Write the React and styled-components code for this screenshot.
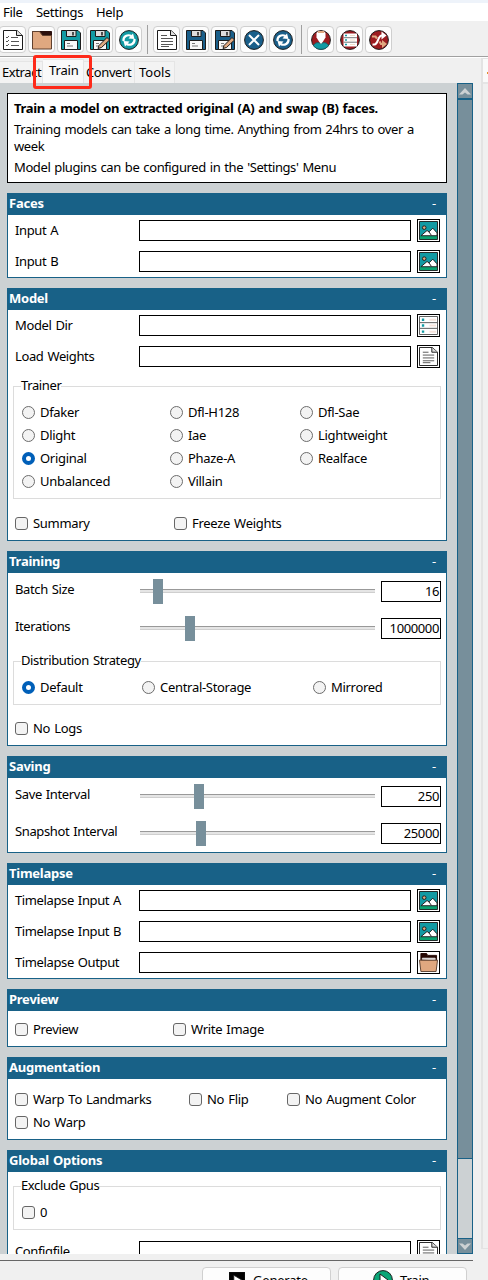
import React from "react";
import styled, { createGlobalStyle, css } from "styled-components";

const BLUE = "#186187";
const PANEL = "#ccd1d3";
const STEEL = "#778f9b";
const TEAL = "#129aa3";
const NAVY = "#1a5f8a";
const MAROON = "#9c1c20";
const TAN = "#e0a880";
const INK = "#1c1c1c";

const Global = createGlobalStyle`
  * { box-sizing: border-box; }
  body { margin: 0; background: #f0f0f0; overflow: hidden; }
`;

const Window = styled.div`
  width: 488px;
  height: 1280px;
  overflow: hidden;
  display: flex;
  flex-direction: column;
  background: #f0f0f0;
  color: #000;
  font: 13px/18px "Noto Sans", "Open Sans", sans-serif;
  letter-spacing: -0.38px;
  word-spacing: 1px;
  white-space: nowrap;
`;

const TitleEdge = styled.div`
  height: 3px;
  background: #eef3fa;
  flex: none;
`;

const MenuBar = styled.nav`
  height: 18px;
  flex: none;
  background: #fff;
  display: flex;
  gap: 14px;
  padding-left: 3px;
  line-height: 19px;
  letter-spacing: -0.3px;
`;

const MenuItem = styled.span`
  width: ${(p) => p.$w}px;
`;

const Toolbar = styled.div`
  height: 36px;
  flex: none;
  display: flex;
  align-items: flex-start;
  gap: 2px;
  padding-top: 5px;
  margin-left: -1px;
  border-bottom: 1px solid #a0a0a0;
  box-shadow: 0 1px 0 #fff;
`;

const ToolButton = styled.button`
  width: 27px;
  height: 27px;
  flex: none;
  padding: 0;
  display: grid;
  place-items: center;
  background: #fdfdfd;
  border: 1px solid #cfcfcf;
  border-radius: 4px;
`;

const Separator = styled.i`
  width: 1px;
  height: 29px;
  margin: -1px 3px 0;
  background: #a0a0a0;
`;

const Workspace = styled.div`
  flex: none;
  height: 1197px;
  display: flex;
`;

const LeftPane = styled.div`
  width: 473px;
  flex: none;
`;

const TabRow = styled.div`
  position: relative;
  height: 26px;
  display: flex;
  align-items: flex-end;
`;

const Tab = styled.div`
  width: ${(p) => p.$w}px;
  height: ${(p) => (p.$active ? 24 : 22)}px;
  padding-left: ${(p) => p.$pad}px;
  line-height: ${(p) => (p.$active ? 21 : 20)}px;
  letter-spacing: ${(p) => p.$ls || 0}px;
  background: ${(p) => (p.$active ? "#f9f9f9" : "#f3f3f3")};
  border: solid #e5e5e5;
  border-width: 1px 1px 0 0;
`;

const Highlight = styled.div`
  position: absolute;
  left: 33px;
  top: -2px;
  width: 59px;
  height: 34px;
  border: 3px solid #fe2a1a;
  border-radius: 3px;
  z-index: 2;
`;

const ScrollArea = styled.div`
  display: flex;
  height: 1171px;
  background: ${PANEL};
`;

const Content = styled.main`
  width: 457px;
  height: 1171px;
  overflow: hidden;
  padding: 10px 10px 0 7px;
  display: flex;
  flex-direction: column;
  gap: 10px;
`;

const InfoBox = styled.section`
  flex: none;
  height: 90px;
  border: 1px solid #000;
  background: #fff;
  padding: 6px 6px 0;
`;

const InfoLine = styled.p`
  margin: 0 0 ${(p) => p.$after || 0}px;
  line-height: 17px;
  letter-spacing: ${(p) => (p.$bold ? -0.35 : -0.4)}px;
  font-weight: ${(p) => (p.$bold ? 700 : 400)};
`;

const Panel = styled.section`
  flex: none;
  width: 440px;
  height: ${(p) => p.$h}px;
  border: 1px solid ${BLUE};
  border-top: 0;
  background: #fff;
`;

const PanelHeader = styled.header`
  height: 22px;
  margin: 0 -1px;
  padding: 0 11px 0 2px;
  display: flex;
  justify-content: space-between;
  background: ${BLUE};
  color: #fff;
  line-height: 21px;
  letter-spacing: -0.25px;
`;

const FieldRow = styled.div`
  height: 31px;
  display: grid;
  grid-template-columns: 118px 272px 23px;
  column-gap: 6px;
  padding: 4px 0 0 7px;
`;

const SliderRow = styled.div`
  height: 37px;
  display: grid;
  grid-template-columns: 125px 235px 60px;
  padding: 6px 0 0 7px;
  & > :last-child { margin-left: 6px; }
`;

const Label = styled.span`
  line-height: ${(p) => (p.$tall ? 20 : 22)}px;
`;

const field = css`
  height: 21px;
  border: 1px solid #000;
  background: #fff;
`;

const TextField = styled.div`
  ${field}
  margin-top: 1px;
`;

const NumberField = styled.div`
  ${field}
  margin-top: 2px;
  width: 60px;
  padding-right: 1px;
  text-align: right;
  line-height: 18px;
`;

const Picker = styled.button`
  width: 23px;
  height: 23px;
  padding: 1px;
  display: grid;
  place-items: center;
  border: 1px solid #000;
  background: #fff;
`;

const Slider = styled.div`
  height: 25px;
  display: flex;
  align-items: center;
  padding-left: ${(p) => p.$at}px;
  background: linear-gradient(#999 0 1px, #e5e5e5 1px 3px, #cfcfcf 3px 4px) 0 10px / 100% 4px no-repeat;
`;

const Thumb = styled.i`
  width: 10px;
  height: 25px;
  background: ${STEEL};
`;

const Group = styled.fieldset`
  position: relative;
  height: ${(p) => p.$h}px;
  margin: 14px 5px ${(p) => p.$after || 0}px;
  padding: 19px 0 0 8px;
  border: 1px solid #dcdcdc;
`;

const GroupTitle = styled.span`
  position: absolute;
  left: 7px;
  top: -11px;
  line-height: 18px;
  background: #fff;
`;

const Options = styled.div`
  display: grid;
  grid-template-columns: ${(p) => p.$cols};
  grid-auto-rows: 23px;
  padding: ${(p) => p.$pad || 0};
`;

const Option = styled.label`
  display: flex;
  gap: 5px;
  height: 13px;
  line-height: 12px;
  letter-spacing: -0.3px;
`;

const Radio = styled.i`
  width: 13px;
  height: 13px;
  flex: none;
  border-radius: 50%;
  border: ${(p) => (p.$on ? "4px solid #005fb8" : "1px solid #6c6c6c")};
  background: ${(p) => (p.$on ? "#fff" : "#f3f3f3")};
`;

const Check = styled.i`
  width: 13px;
  height: 13px;
  flex: none;
  border-radius: 3px;
  border: 1px solid #666;
  background: #f3f3f3;
`;

const Scrollbar = styled.div`
  width: 16px;
  border: solid ${BLUE};
  border-width: 0 1px;
  display: flex;
  flex-direction: column;
`;

const Arrow = styled.div`
  height: 16px;
  flex: none;
  border: solid ${BLUE};
  border-width: 1px 0;
  background: ${STEEL};
  display: grid;
  place-items: center;
`;

const ScrollThumb = styled.div`
  height: 1060px;
  flex: none;
  border: solid ${BLUE};
  border-width: 1px 0;
  background: ${STEEL};
`;

const ScrollTrough = styled.div`
  flex: 1;
`;

const RightPane = styled.div`
  width: 7px;
  height: 1191px;
  margin: 1px 0 0 8px;
  border: solid #e3e3e3;
  border-width: 1px 0 1px 2px;
`;

const RightTab = styled.div`
  height: 25px;
  background: #fafafa;
  border-bottom: 2px solid #e5e5e5;
  display: flex;
  justify-content: flex-end;
  padding-top: 13px;
`;

const Spark = styled.i`
  width: 1px;
  height: 2px;
  background: #e0912c;
`;

const Footer = styled.footer`
  flex: none;
  height: 30px;
  width: 473px;
  margin-top: 6px;
  border-top: 1px solid #666;
  padding: 6px 0 0 202px;
  display: flex;
  gap: 7px;
`;

const ActionButton = styled.button`
  width: 129px;
  height: 28px;
  flex: none;
  display: flex;
  justify-content: flex-start;
  align-items: center;
  gap: ${(p) => p.$gap}px;
  padding: 0 0 2px ${(p) => p.$pad}px;
  border: 1px solid #d0d0d0;
  border-radius: 4px;
  background: #fdfdfd;
  font: inherit;
  letter-spacing: -0.2px;
  line-height: 16px;
  color: #000;
`;

const Svg = ({ size = 20, children }) => (
  <svg width={size} height={size} viewBox="0 0 20 20" fill="none" stroke={INK} strokeWidth="1">
    {children}
  </svg>
);

const Sheet = ({ checks, size }) => (
  <Svg size={size}>
    <path d="M.5.5H14L19.5 5.5V19.5H.5Z" fill="#fff" />
    <path d="M13.5.5V5.5H19.5" fill="#ddd" />
    {checks ? (
      <path d="M3 7l1 1 2-2M3 11l1 1 2-2M3 15l1 1 2-2M8 7.5h7M8 11.5h8M8 15.5h8" stroke="#555" />
    ) : (
      <path d="M4 5.5h6M4 8.5h12M4 11.5h12M4 14.5h12M4 16.5h8" stroke="#555" />
    )}
  </Svg>
);

const Folder = () => (
  <Svg>
    <path d="M.5 1.500H19.500V8H.5Z" fill="#2b0f0c" stroke="#2b0f0c" />
    <path d="M.5 1.500H7.500L10.500 5.500H19.500V19H.5Z" fill={TAN} stroke="#60412f" />
  </Svg>
);

const OpenFolder = ({ size }) => (
  <Svg size={size}>
    <path d="M2 9V.5H8L9 2.500H18.500V9Z" fill="#250703" stroke="#250703" />
    <path d="M3.500 7V5.500H17V7.500" fill="#fff" stroke="#ddd" />
    <path d="M.5 7.500H19.500L18 19.500H2Z" fill={TAN} stroke="#5b4030" />
  </Svg>
);

const Disk = ({ color, pencil }) => (
  <Svg>
    <path d="M.5.5H17L19.500 3V19.500H.5Z" fill={color} />
    <path d="M5.500.5H15V6.500H5.500Z" fill="#ddd" />
    <path d="M12 2V5.500" strokeWidth="1.500" />
    <path d="M3.500 10.500H16.500V19.500H3.500Z" fill="#f8f8f8" />
    <path d="M6 13.500H9M6 16H12" stroke="#777" />
    {pencil && <path d="M8 18.500L9 15.500 17 7.500 19.500 10 11.500 17.500Z" fill={TAN} />}
  </Svg>
);

const Refresh = ({ color }) => (
  <Svg>
    <circle cx="10" cy="10" r="9.400" fill={color} />
    <g stroke="#fff" strokeWidth="2.200">
      <path d="M4.500 11C4 6.500 8.500 4 12.500 6" />
      <path d="M15.500 9C16 13.500 11.500 16 7.500 14" />
    </g>
    <path d="M9.500 8.500L15.500 9 14 3.500ZM10.500 11.500L4.500 11 6 16.500Z" fill="#fff" stroke="none" />
  </Svg>
);

const Clear = () => (
  <Svg>
    <circle cx="10" cy="10" r="9.400" fill={NAVY} />
    <path d="M5 5L15 15M15 5L5 15" stroke="#fff" strokeWidth="2" />
  </Svg>
);

const Face = () => (
  <Svg>
    <circle cx="10" cy="10" r="9.400" fill={MAROON} />
    <path d="M2.500 15.500C4 12.500 7 12 10 13.500 13 12 16 12.500 17.500 15.500 14.500 20.500 5.500 20.500 2.500 15.500Z" fill={TEAL} stroke="#17636a" />
    <path d="M5.500 3L7 1.500H13L14.500 3V7.500L12 11.500 10 14 8 11.500 5.500 7.500Z" fill="#fff" stroke="none" />
    <path d="M7 1H13V3H7Z" fill={TAN} stroke="none" />
  </Svg>
);

const ModelStack = () => (
  <Svg>
    <circle cx="10" cy="10" r="9.400" fill={MAROON} />
    <path d="M3.500 3.500H17V16.500H3.500Z" fill="#fff" stroke="none" />
    <path d="M3.500 7.700H17M3.500 12.200H17" stroke="#777" />
    <path d="M5 5.500H7M5 10H7M5 14.500H7" stroke={TEAL} strokeWidth="1.500" />
    <path d="M10 5.500H15M10 10H15M10 14.500H15" stroke="#f1dfc9" />
  </Svg>
);

const Shuffle = () => (
  <Svg>
    <circle cx="10" cy="10" r="9.400" fill={MAROON} />
    <path d="M3 6.500H6.500L8 8.500M10.500 11.500L12 14H14" stroke={TAN} strokeWidth="2.200" />
    <path d="M13 10L18 14 13 18Z" fill={TAN} stroke="none" />
    <path d="M3.500 14.500H5.500C9.500 14.500 8.500 5.500 13 5.500H14" stroke="#fff" strokeWidth="2" />
    <path d="M12.500 1.500L17.500 5.500 12.500 9.500Z" fill="#fff" stroke="none" />
  </Svg>
);

const Picture = () => (
  <Svg size={19}>
    <path d="M.5.5H19.500V19.500H.5Z" fill={TEAL} />
    <path d="M1 15.500H19V19H1Z" fill="#0aa06f" stroke="none" />
    <circle cx="5.500" cy="7" r="1.900" fill={TAN} />
    <path d="M2 15.500L8.500 10 10.500 11.500 14.500 7.500 19 12.500V15.500Z" fill="#fff" />
    <path d="M10.500 11.500L13 15" />
  </Svg>
);

const Drawer = () => (
  <Svg size={19}>
    <path d="M.5.5H19.500V19.500H.5ZM.5 7H19.500M.5 13H19.500" fill="#fff" stroke="#555" />
    <path d="M3 4H5.500M3 10H5.500M3 16.500H5.500" stroke={TEAL} strokeWidth="2.500" />
    <path d="M11 4H18M11 10H18M11 16.500H18" stroke="#f6e3dc" strokeWidth="2" />
  </Svg>
);

const pickers = {
  picture: <Picture />,
  drawer: <Drawer />,
  sheet: <Sheet size={19} />,
  folder: <OpenFolder size={19} />,
};

const PathInput = ({ label, icon }) => (
  <FieldRow>
    <Label>{label}</Label>
    <TextField />
    <Picker aria-label={label}>{pickers[icon]}</Picker>
  </FieldRow>
);

const Scale = ({ label, at, value }) => (
  <SliderRow>
    <Label $tall>{label}</Label>
    <Slider $at={at}><Thumb /></Slider>
    <NumberField>{value}</NumberField>
  </SliderRow>
);

const Section = ({ title, h, children }) => (
  <Panel $h={h}>
    <PanelHeader><b>{title}</b><span>-</span></PanelHeader>
    {children}
  </Panel>
);

const Choices = ({ items, selected, cols, pad, box }) => (
  <Options $cols={cols} $pad={pad}>
    {items.map((t) => (
      <Option key={t}>
        {box ? <Check /> : <Radio $on={t === selected} />}
        {t}
      </Option>
    ))}
  </Options>
);

export default function App() {
  return (
    <Window>
      <Global />
      <TitleEdge />
      <MenuBar>
        <MenuItem $w={19}>File</MenuItem>
        <MenuItem $w={46}>Settings</MenuItem>
        <MenuItem $w={27}>Help</MenuItem>
      </MenuBar>
      <Toolbar>
        <ToolButton><Sheet checks /></ToolButton>
        <ToolButton><Folder /></ToolButton>
        <ToolButton><Disk color={TEAL} /></ToolButton>
        <ToolButton><Disk color={TEAL} pencil /></ToolButton>
        <ToolButton><Refresh color={TEAL} /></ToolButton>
        <Separator />
        <ToolButton><Sheet /></ToolButton>
        <ToolButton><Disk color={NAVY} /></ToolButton>
        <ToolButton><Disk color={NAVY} pencil /></ToolButton>
        <ToolButton><Clear /></ToolButton>
        <ToolButton><Refresh color={NAVY} /></ToolButton>
        <Separator />
        <ToolButton><Face /></ToolButton>
        <ToolButton><ModelStack /></ToolButton>
        <ToolButton><Shuffle /></ToolButton>
      </Toolbar>
      <Workspace>
        <LeftPane>
          <TabRow>
            <Tab $w={43} $pad={2} $ls={-0.4}>Extract</Tab>
            <Tab $w={41} $pad={6} $ls={-0.15} $active>Train</Tab>
            <Tab $w={51} $pad={2} $ls={-0.4}>Convert</Tab>
            <Tab $w={40} $pad={4}>Tools</Tab>
            <Highlight />
          </TabRow>
          <ScrollArea>
            <Content>
              <InfoBox>
                <InfoLine $bold $after={4}>Train a model on extracted original (A) and swap (B) faces.</InfoLine>
                <InfoLine>Training models can take a long time. Anything from 24hrs to over a</InfoLine>
                <InfoLine $after={4}>week</InfoLine>
                <InfoLine>Model plugins can be configured in the 'Settings' Menu</InfoLine>
              </InfoBox>
              <Section title="Faces" h={85}>
                <PathInput label="Input A" icon="picture" />
                <PathInput label="Input B" icon="picture" />
              </Section>
              <Section title="Model" h={253}>
                <PathInput label="Model Dir" icon="drawer" />
                <PathInput label="Load Weights" icon="sheet" />
                <Group $h={113}>
                  <GroupTitle>Trainer</GroupTitle>
                  <Choices
                    cols="148px 130px 130px"
                    selected="Original"
                    items={["Dfaker", "Dfl-H128", "Dfl-Sae", "Dlight", "Iae", "Lightweight", "Original", "Phaze-A", "Realface", "Unbalanced", "Villain"]}
                  />
                </Group>
                <Choices box cols="159px 150px" pad="18px 0 0 7px" items={["Summary", "Freeze Weights"]} />
              </Section>
              <Section title="Training" h={195}>
                <Scale label="Batch Size" at={13} value="16" />
                <Scale label="Iterations" at={45} value="1000000" />
                <Group $h={44}>
                  <GroupTitle>Distribution Strategy</GroupTitle>
                  <Choices cols="120px 171px 110px" selected="Default" items={["Default", "Central-Storage", "Mirrored"]} />
                </Group>
                <Choices box cols="160px" pad="17px 0 0 7px" items={["No Logs"]} />
              </Section>
              <Section title="Saving" h={97}>
                <Scale label="Save Interval" at={54} value="250" />
                <Scale label="Snapshot Interval" at={56} value="25000" />
              </Section>
              <Section title="Timelapse" h={116}>
                <PathInput label="Timelapse Input A" icon="picture" />
                <PathInput label="Timelapse Input B" icon="picture" />
                <PathInput label="Timelapse Output" icon="folder" />
              </Section>
              <Section title="Preview" h={58}>
                <Choices box cols="158px 150px" pad="12px 0 0 7px" items={["Preview", "Write Image"]} />
              </Section>
              <Section title="Augmentation" h={83}>
                <Choices box cols="174px 98px 140px" pad="14px 0 0 7px" items={["Warp To Landmarks", "No Flip", "No Augment Color", "No Warp"]} />
              </Section>
              <Section title="Global Options" h={125}>
                <Group $h={44} $after={6}>
                  <GroupTitle>Exclude Gpus</GroupTitle>
                  <Choices box cols="100px" items={["0"]} />
                </Group>
                <PathInput label="Configfile" icon="sheet" />
              </Section>
            </Content>
            <Scrollbar>
              <Arrow><svg width="12" height="7" viewBox="0 0 12 7"><path d="M0 6.500L6 0l6 6.500H8.500L6 4.500 3.500 6.500Z" fill={PANEL} /></svg></Arrow>
              <ScrollThumb />
              <ScrollTrough />
              <Arrow><svg width="12" height="7" viewBox="0 0 12 7"><path d="M0 .5L6 7l6-6.500H8.500L6 2.500 3.500.5Z" fill={PANEL} /></svg></Arrow>
            </Scrollbar>
          </ScrollArea>
        </LeftPane>
        <RightPane><RightTab><Spark /></RightTab></RightPane>
      </Workspace>
      <Footer>
        <ActionButton $pad={26} $gap={8}>
          <Svg size={16}><path d="M0 0H20V20H0Z" fill="#000" /><path d="M6 4L16 10 6 17Z" fill="#fff" /></Svg>
          Generate
        </ActionButton>
        <ActionButton $pad={34} $gap={7}>
          <Svg><circle cx="10" cy="10" r="9.400" fill="#0aa577" /><path d="M7 4L15 10 7 16Z" fill="#fff" /></Svg>
          Train
        </ActionButton>
      </Footer>
    </Window>
  );
}
